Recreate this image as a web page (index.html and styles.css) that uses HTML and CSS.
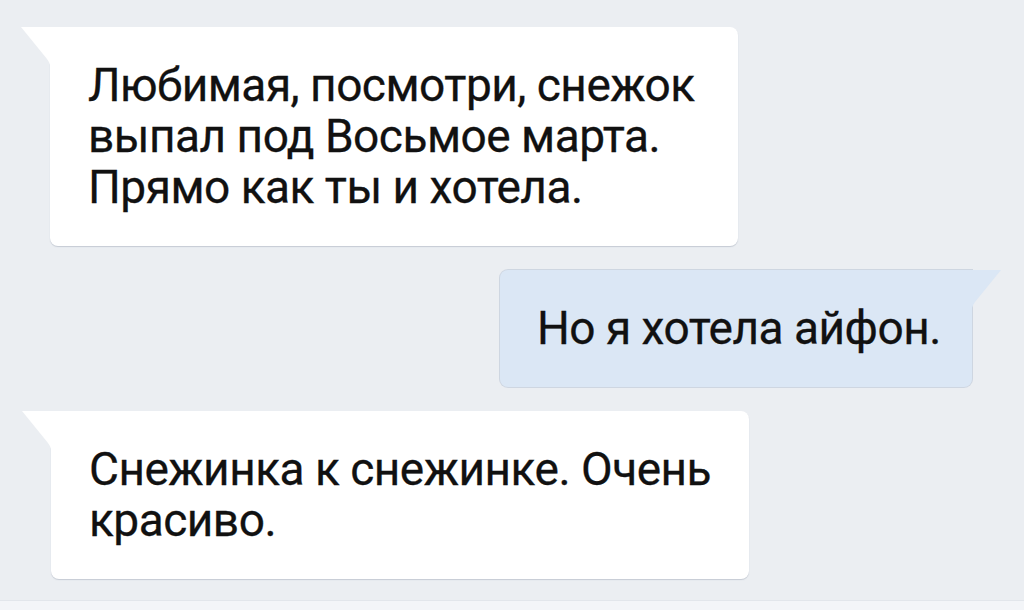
FILE: index.html
```html
<!DOCTYPE html>
<html lang="ru">
<head>
<meta charset="utf-8">
<link rel="stylesheet" href="styles.css">
</head>
<body>
<div class="frame">
  <div class="chat">
    <div class="bubble in b1">
      <svg class="tail tail-left" viewBox="0 0 30 46" width="30" height="46"><path d="M0 0 H30 V46 C30 40 29 36 26 32 L0 0 Z" fill="#ffffff"/></svg>
      <p class="text">Любимая, посмотри, снежок<br>выпал под Восьмое марта.<br>Прямо как ты и хотела.</p>
    </div>
    <div class="bubble out b2">
      <svg class="tail tail-right" viewBox="0 0 30 46" width="30" height="46"><path d="M30 0 H0 V46 C0 40 1 36 4 32 L30 0 Z" fill="#dbe7f5"/></svg>
      <p class="text">Но я хотела айфон.</p>
    </div>
    <div class="bubble in b3">
      <svg class="tail tail-left" viewBox="0 0 30 46" width="30" height="46"><path d="M0 0 H30 V46 C30 40 29 36 26 32 L0 0 Z" fill="#ffffff"/></svg>
      <p class="text">Снежинка к снежинке. Очень<br>красиво.</p>
    </div>
  </div>
</div>
</body>
</html>
```

FILE: styles.css
```css
html, body {
  margin: 0;
  padding: 0;
  background: #f3f5f8;
}
.frame {
  width: 1024px;
  height: 601px;
  box-sizing: border-box;
  background: #ebeef2;
  border-bottom: 1px solid #e2e6eb;
  overflow: hidden;
}
.chat {
  display: flex;
  flex-direction: column;
  gap: 24px;
  padding: 27px 52px 0 50px;
}
.bubble {
  position: relative;
  box-sizing: border-box;
  border-radius: 8px;
  padding: 33px 38px;
  box-shadow: 0 1px 1px rgba(150, 160, 175, 0.45);
}
.bubble.in {
  background: #ffffff;
  align-self: flex-start;
  border-top-left-radius: 0;
}
.bubble.out {
  background: #dbe7f5;
  align-self: flex-end;
  border-top-right-radius: 0;
  box-shadow: 0 0 0 1px rgba(170, 185, 205, 0.45);
}
.b1 { width: 688px; }
.b2 { width: 472px; padding-left: 37px; }
.b3 { width: 698px; margin-left: 1px; }
.tail {
  position: absolute;
  top: 0;
}
.tail-left { left: -29px; }
.tail-right { right: -29px; }
.text {
  margin: 0;
  font-family: Roboto, "Liberation Sans", sans-serif;
  font-size: 46px;
  letter-spacing: -0.5px;
  line-height: 51px;
  color: #111111;
  -webkit-text-stroke: 0.3px #111111;
  white-space: nowrap;
}
```
